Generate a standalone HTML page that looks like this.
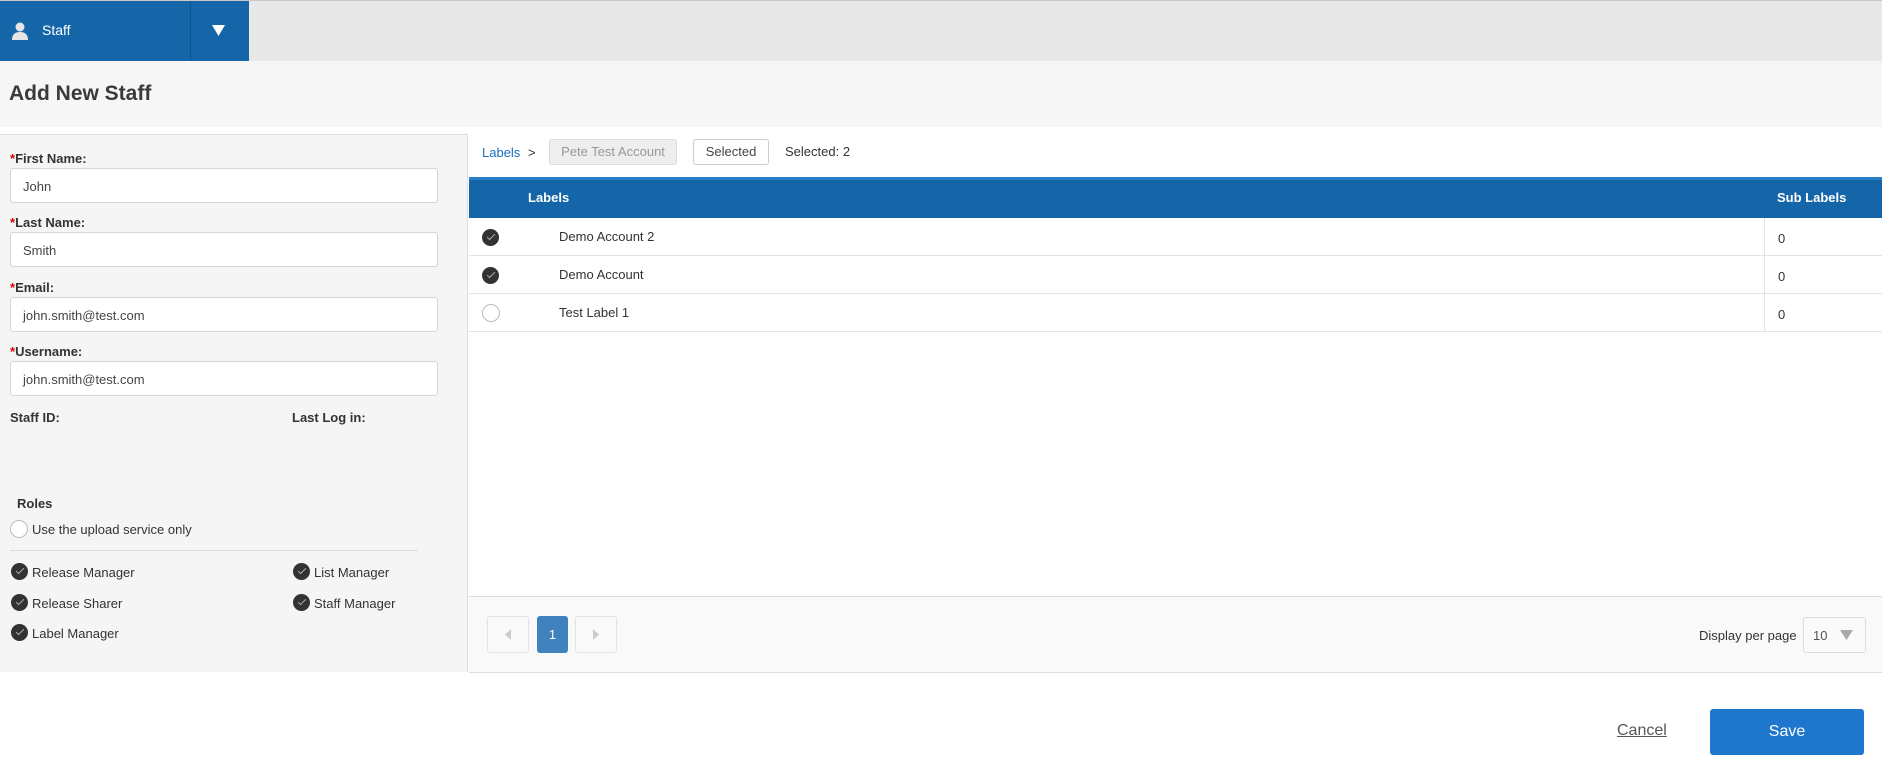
<!DOCTYPE html>
<html><head><meta charset="utf-8"><style>
*{box-sizing:border-box;margin:0;padding:0}
body{width:1882px;height:765px;position:relative;background:#fff;font-family:"Liberation Sans",Arial,sans-serif;color:#333;overflow:hidden}
.a{position:absolute}
.lbl{font-size:13px;font-weight:bold;color:#333}
.lbl b{color:#d00}
.inp{position:absolute;left:10px;width:428px;height:35px;border:1px solid #d6d6d6;border-radius:3px;background:#fff;font-size:13px;color:#444;padding:10px 12px}
.chk{position:absolute;width:17px;height:17px;border-radius:50%;background:#333}
.chk:after{content:"";position:absolute;left:5px;top:5px;width:7px;height:3px;border-left:1.5px solid #aaa;border-bottom:1.5px solid #aaa;transform:rotate(-45deg)}
.rad{position:absolute;width:18px;height:18px;border-radius:50%;border:1px solid #bbb;background:#fff}
.t14{font-size:13px;color:#333}
.row{position:absolute;left:469px;width:1413px;border-bottom:1px solid #e3e3e3}
</style></head><body>
<div class="a" style="left:0;top:0;width:1882px;height:61px;background:#e8e8e8;border-top:1px solid #c8c8c8"></div>
<div class="a" style="left:0;top:1px;width:249px;height:60px;background:#1566a8"></div>
<div class="a" style="left:190px;top:1px;width:1px;height:60px;background:#0e5590"></div>
<svg class="a" style="left:12px;top:22px" width="16" height="18" viewBox="0 0 16 18"><circle cx="8" cy="5" r="4.5" fill="#e6e6e6"/><path d="M0 18 Q0 10 8 10 Q16 10 16 18Z" fill="#e6e6e6"/></svg>
<div class="a" style="left:42px;top:22px;color:#fff;font-size:14px">Staff</div>
<svg class="a" style="left:212px;top:25px" width="13" height="11"><path d="M0 0H13L6.5 11Z" fill="#fff"/></svg>
<div class="a" style="left:0;top:61px;width:1882px;height:66px;background:#f6f6f6"></div>
<div class="a" style="left:9px;top:82px;font-size:21px;font-weight:bold;color:#3a3a3a">Add New Staff</div>
<div class="a" style="left:0;top:134px;width:468px;height:538px;background:#f5f5f5;border-top:1px solid #ddd;border-right:1px solid #ddd"></div>
<div class="a lbl" style="left:10px;top:151px"><b>*</b>First Name:</div>
<div class="inp" style="top:168px">John</div>
<div class="a lbl" style="left:10px;top:215px"><b>*</b>Last Name:</div>
<div class="inp" style="top:232px">Smith</div>
<div class="a lbl" style="left:10px;top:280px"><b>*</b>Email:</div>
<div class="inp" style="top:297px">john.smith@test.com</div>
<div class="a lbl" style="left:10px;top:344px"><b>*</b>Username:</div>
<div class="inp" style="top:361px">john.smith@test.com</div>
<div class="a lbl" style="left:10px;top:410px">Staff ID:</div>
<div class="a lbl" style="left:292px;top:410px">Last Log in:</div>
<div class="a lbl" style="left:17px;top:496px">Roles</div>
<div class="rad" style="left:10px;top:520px"></div>
<div class="a t14" style="left:32px;top:522px">Use the upload service only</div>
<div class="a" style="left:10px;top:550px;width:408px;height:1px;background:#ddd"></div>
<div class="chk" style="left:11px;top:563px"></div><div class="a t14" style="left:32px;top:565px">Release Manager</div>
<div class="chk" style="left:11px;top:594px"></div><div class="a t14" style="left:32px;top:596px">Release Sharer</div>
<div class="chk" style="left:11px;top:624px"></div><div class="a t14" style="left:32px;top:626px">Label Manager</div>
<div class="chk" style="left:293px;top:563px"></div><div class="a t14" style="left:314px;top:565px">List Manager</div>
<div class="chk" style="left:293px;top:594px"></div><div class="a t14" style="left:314px;top:596px">Staff Manager</div>
<div class="a" style="left:482px;top:145px;font-size:13px;color:#1a6fc0">Labels</div>
<div class="a t14" style="left:528px;top:145px">&gt;</div>
<div class="a" style="left:549px;top:139px;width:128px;height:26px;background:#eee;border:1px solid #ddd;border-radius:3px;font-size:13px;color:#999;text-align:center;line-height:24px">Pete Test Account</div>
<div class="a" style="left:693px;top:139px;width:76px;height:26px;background:#fff;border:1px solid #ccc;border-radius:3px;font-size:13px;color:#444;text-align:center;line-height:24px">Selected</div>
<div class="a t14" style="left:785px;top:144px">Selected: 2</div>
<div class="a" style="left:469px;top:177px;width:1413px;height:41px;background:#1566a8;border-top:3px solid #2a80c8"></div>
<div class="a" style="left:528px;top:190px;font-size:13px;font-weight:bold;color:#fff">Labels</div>
<div class="a" style="left:1777px;top:190px;font-size:13px;font-weight:bold;color:#fff">Sub Labels</div>
<div class="row" style="top:218px;height:38px"></div>
<div class="row" style="top:256px;height:38px"></div>
<div class="row" style="top:294px;height:38px"></div>
<div class="a" style="left:1764px;top:218px;width:1px;height:113px;background:#e3e3e3"></div>
<div class="chk" style="left:482px;top:229px"></div><div class="a t14" style="left:559px;top:229px">Demo Account 2</div><div class="a t14" style="left:1778px;top:231px">0</div>
<div class="chk" style="left:482px;top:267px"></div><div class="a t14" style="left:559px;top:267px">Demo Account</div><div class="a t14" style="left:1778px;top:269px">0</div>
<div class="rad" style="left:482px;top:304px"></div><div class="a t14" style="left:559px;top:305px">Test Label 1</div><div class="a t14" style="left:1778px;top:307px">0</div>
<div class="a" style="left:469px;top:596px;width:1413px;height:77px;background:#f9f9f9;border-top:1px solid #ddd;border-bottom:1px solid #ddd"></div>
<div class="a" style="left:487px;top:616px;width:42px;height:37px;border:1px solid #e2e2e2;border-radius:3px"></div>
<svg class="a" style="left:505px;top:629px" width="6" height="11"><path d="M6 0V11L0 5.5Z" fill="#ccc"/></svg>
<div class="a" style="left:537px;top:616px;width:31px;height:37px;background:#3f82bd;border-radius:3px;color:#fff;font-size:13px;text-align:center;line-height:37px">1</div>
<div class="a" style="left:575px;top:616px;width:42px;height:37px;border:1px solid #e2e2e2;border-radius:3px"></div>
<svg class="a" style="left:593px;top:629px" width="6" height="11"><path d="M0 0V11L6 5.5Z" fill="#ccc"/></svg>
<div class="a t14" style="left:1699px;top:628px">Display per page</div>
<div class="a" style="left:1803px;top:617px;width:63px;height:36px;border:1px solid #ddd;border-radius:3px;background:#fafafa"></div>
<div class="a t14" style="left:1813px;top:628px;color:#555">10</div>
<svg class="a" style="left:1840px;top:630px" width="13" height="10"><path d="M0 0H13L6.5 10Z" fill="#aaa"/></svg>
<div class="a" style="left:1617px;top:722px;font-size:16px;color:#555;text-decoration:underline">Cancel</div>
<div class="a" style="left:1710px;top:709px;width:154px;height:46px;background:#1f77cd;border-radius:3px;color:#fff;font-size:16px;text-align:center;line-height:46px">Save</div>
</body></html>
